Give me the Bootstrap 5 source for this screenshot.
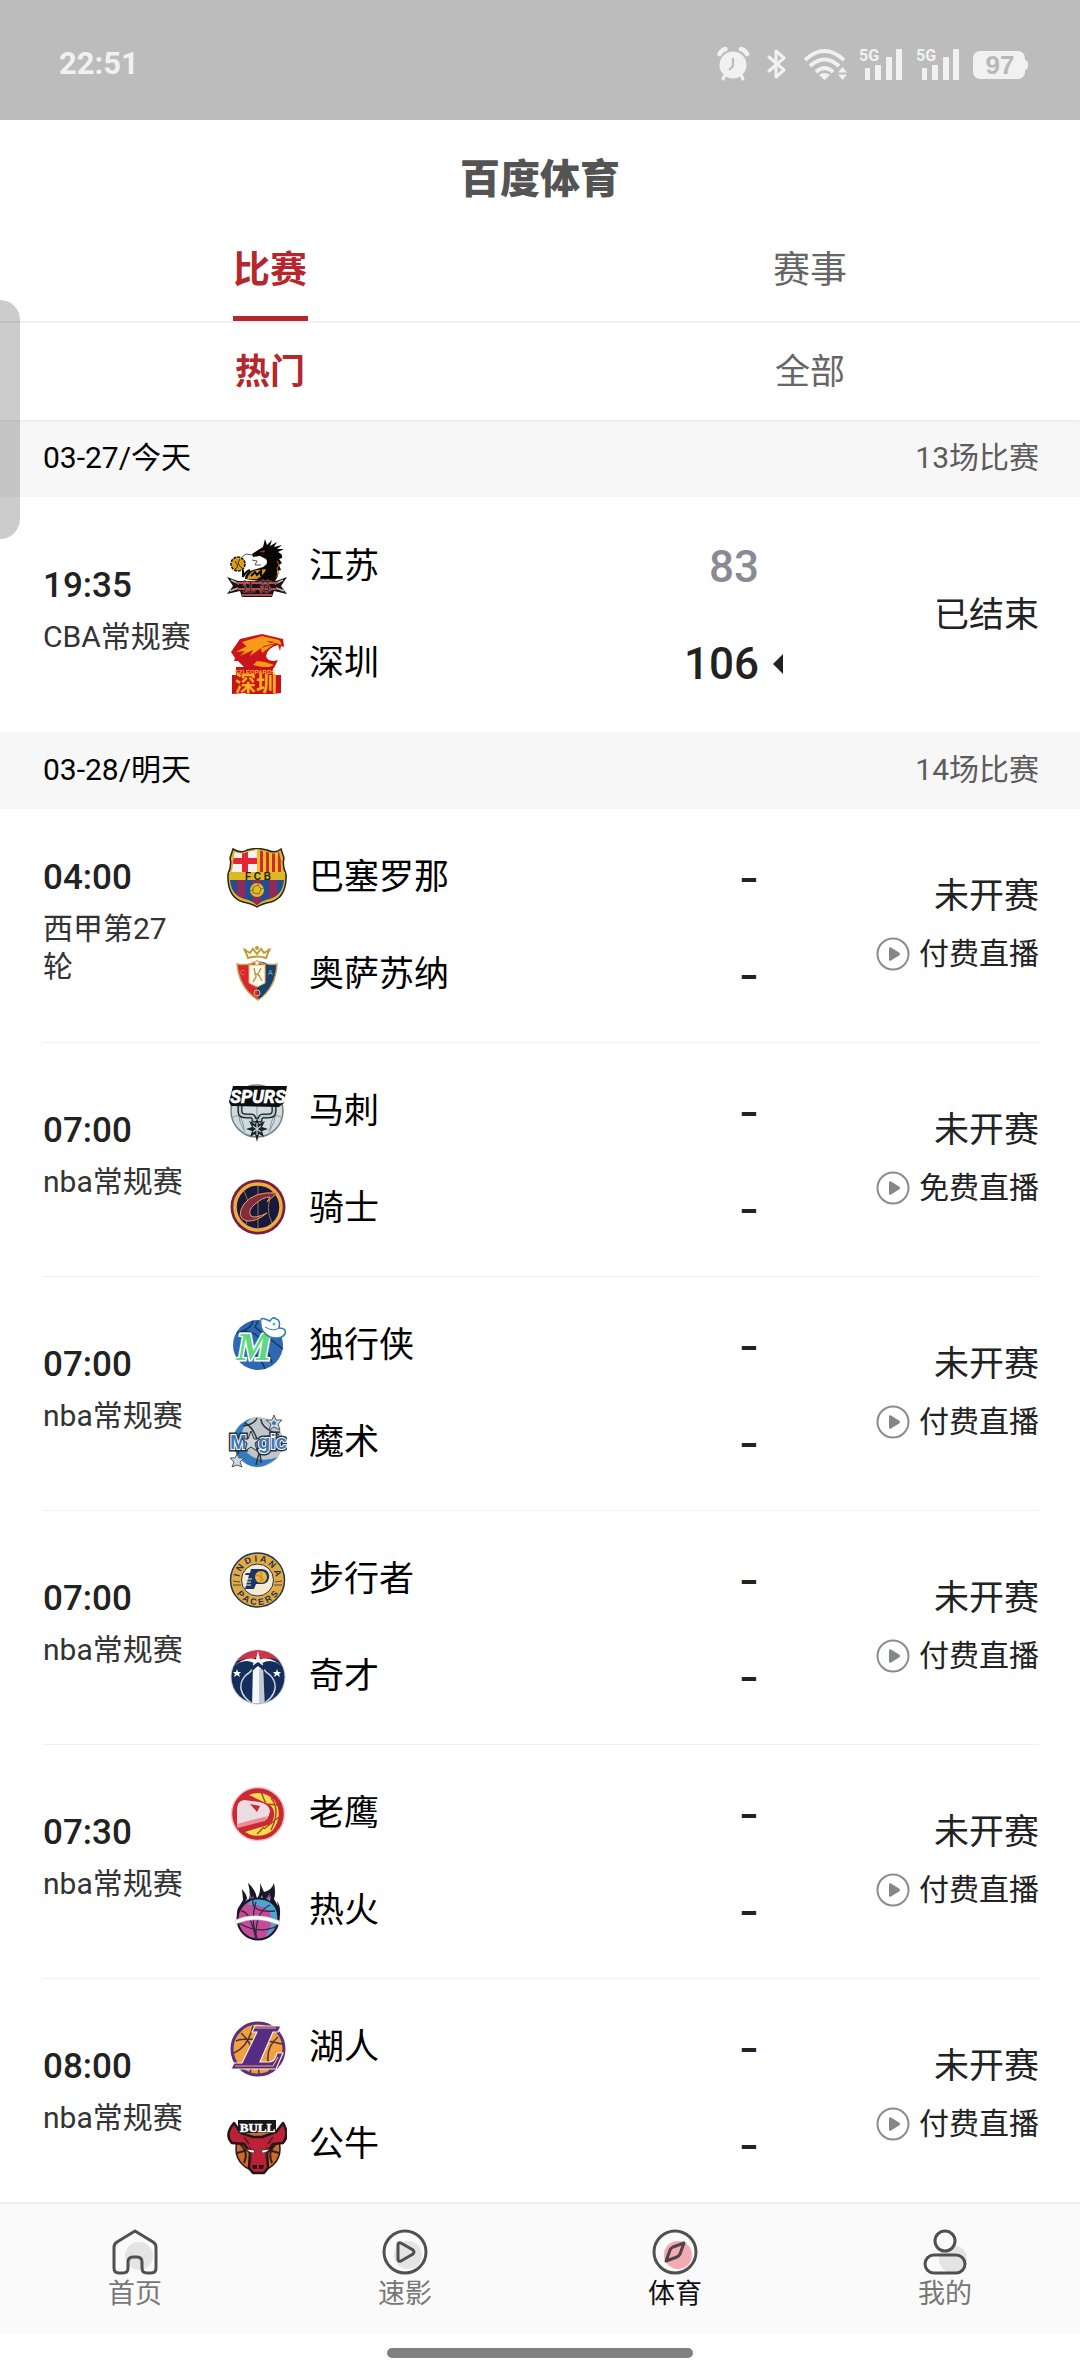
<!DOCTYPE html>
<html lang="zh-CN">
<head>
<meta charset="utf-8">
<meta name="viewport" content="width=device-width, initial-scale=1">
<title>百度体育</title>
<link href="https://cdn.jsdelivr.net/npm/bootstrap@5.3.0/dist/css/bootstrap.min.css" rel="stylesheet">
<style>
body{font-family:Roboto,"Noto Sans CJK SC",sans-serif;background:#fff;color:#000}
button{background:none;border:0;padding:0}
svg{display:block;flex:none}
svg text{font-family:"Liberation Sans","Noto Sans CJK SC",sans-serif}
.statusbar{height:120px;background:#bcbcbc;color:#f1f1f1;padding:8px 52px 0 59px}
.clock{font-size:31px;font-weight:700;line-height:40px}
.status-icons{gap:12px}
.status-icons .net-label{font-family:Roboto,sans-serif;font-size:16px;font-weight:700}
.page-title{font-size:40px;line-height:60px;font-weight:900;color:#545454;padding:30px 0 7px;margin:0;text-align:center}
.main-tabs{border-bottom:2px solid #f0f0f0}
.main-tab{font-size:37px;line-height:100px;padding-top:4px;color:#666;position:relative}
.sub-tab{font-size:35px;line-height:95px;padding-top:2px;color:#666}
.main-tab.active,.sub-tab.active{color:#b4282d;font-weight:700}
.main-tab.active::after{content:"";position:absolute;left:50%;bottom:0;width:75px;height:5px;margin-left:-37px;background:#b4282d}
.match-list{min-height:0;overflow-y:auto;scrollbar-width:none}
.match-list::-webkit-scrollbar{display:none}
.day-head{background:#f7f7f7;font-size:30px;line-height:75px;padding:0 41px 2px 43px;margin:0;font-weight:400}
.day-count{color:#5c5c5c}
.first-day{box-shadow:inset 0 2px 2px #eee}
.fixture{margin:0 41px 0 43px;padding:39px 0 37px;border-bottom:1px solid #f0f0f0}
.fixture.ended{padding:40px 0 38px;border-bottom:0}
.when{width:152px;margin-right:32px;flex:none}
.kickoff{font-size:35px;line-height:20px;font-weight:500;color:#222;margin-bottom:22px}
.league{font-size:30px;line-height:38px;color:#333}
.sides{gap:37px}
.side{height:60px;font-size:35px;line-height:60px}
.side svg{margin-right:22px}
.points{font-size:44px;font-weight:500;color:#222;margin-left:auto}
.points.lost{color:#8a8a94}
.points.unset{font-family:Inter,sans-serif}
.mark-slot{width:24px;padding-left:14px}
.state{width:256px;flex:none;font-size:35px;line-height:44px;color:#222;gap:13px}
.watch{font-size:30px;line-height:44px;color:#222;text-decoration:none;gap:9px;padding-bottom:3px}
.edge-handle{position:absolute;left:0;top:300px;width:20px;height:239px;border-radius:0 20px 20px 0;background:rgba(0,0,0,.2);z-index:5}
.bottom-bar{background:#fafafa;border-top:2px solid #f0f0f0;height:132px}
.bottom-item{font-size:27px;line-height:36px;color:#777;text-decoration:none;padding-top:24px}
.bottom-item.active{color:#111}
.home-strip{height:42px;padding-top:14px}
.home-pill{width:306px;height:10px;border-radius:5px;background:#808080}
</style>
<script src="https://cdn.jsdelivr.net/npm/bootstrap@5.3.0/dist/js/bootstrap.bundle.min.js"></script>
</head>
<body>
<svg width="0" height="0" class="position-absolute" aria-hidden="true">
  <symbol id="play" viewBox="0 0 34 34"><circle cx="17" cy="17" r="15.500" fill="#fff" stroke="#8b8b90" stroke-width="2"/><path d="M13 11.500q0-2 2-1l8 5q2 1.500 0 3l-8 5q-2 1-2-1z" fill="#85858c"/></symbol>
</svg>
<div class="vh-100 d-flex flex-column position-relative overflow-hidden">
  <div class="statusbar d-flex align-items-center justify-content-between flex-shrink-0">
    <div class="clock">22:51</div>
    <div class="status-icons d-flex align-items-center">
      <svg width="38" height="36" viewBox="0 0 38 36"><g fill="none" stroke="#f1f1f1" stroke-linecap="round"><path d="M2.500 8q2-4 6-5M30 8q-2-4-6-5" stroke-width="4.500"/><path d="M8 29l-2 4M24 29l2 4" stroke-width="3"/></g><circle cx="16" cy="19" r="13.500" fill="#f1f1f1"/><path d="M16 12v8l-4 4" fill="none" stroke="#bcbcbc" stroke-width="2.200"/></svg>
      <svg width="24" height="36" viewBox="0 0 24 36"><path d="M2 11l15 13-8 7V5l8 7L2 25" fill="none" stroke="#f1f1f1" stroke-width="3" stroke-linejoin="round" stroke-linecap="round"/></svg>
      <svg width="44" height="36" viewBox="0 0 44 36"><g fill="none" stroke="#f1f1f1" stroke-width="4"><path d="M2 14q19.500-18 39 0M7 20q14.500-13 29 0M13 26q8.500-8 17 0"/></g><path d="M16 29q5.500-4 11 0l-5.500 5zM35 26.500h9L39.500 21zM35 28.500h9L39.500 34z" fill="#f1f1f1"/></svg>
      <svg width="45" height="36" viewBox="0 0 45 36"><text class="net-label" x="0" y="15" fill="#f1f1f1">5G</text><path fill="#f1f1f1" d="M6 22h5v12H6zM16 19h6v15h-6zM27 11h6v23h-6zM37 3h6v31h-6z"/></svg>
      <svg width="45" height="36" viewBox="0 0 45 36"><text class="net-label" x="0" y="15" fill="#f1f1f1">5G</text><path fill="#f1f1f1" d="M6 22h5v12H6zM16 19h6v15h-6zM27 11h6v23h-6zM37 3h6v31h-6z"/></svg>
      <svg width="55" height="36" viewBox="0 0 55 36"><rect x="0" y="5" width="52" height="28" rx="7" fill="#f1f1f1"/><path d="M52 14q3 0 3 5t-3 5z" fill="#f1f1f1"/><text x="27" y="28" font-size="26" font-weight="700" text-anchor="middle" fill="#b8b8b8">97</text></svg>
    </div>
  </div>
  <h1 class="page-title flex-shrink-0">百度体育</h1>
  <nav class="main-tabs d-flex flex-shrink-0">
    <button type="button" class="main-tab active w-50">比赛</button>
    <button type="button" class="main-tab w-50">赛事</button>
  </nav>
  <nav class="d-flex flex-shrink-0">
    <button type="button" class="sub-tab active w-50">热门</button>
    <button type="button" class="sub-tab w-50">全部</button>
  </nav>

  <main class="match-list flex-grow-1">
    <h2 class="day-head first-day d-flex justify-content-between"><span>03-27/今天</span><span class="day-count">13场比赛</span></h2>
    <article class="fixture ended d-flex align-items-center">
      <div class="when"><div class="kickoff">19:35</div><div class="league">CBA常规赛</div></div>
      <div class="sides d-flex flex-column flex-grow-1">
        <div class="side d-flex align-items-center">
          <svg width="60" height="60" viewBox="0 0 60 60"><path d="M18 42q0-7 8-9l10-3q6-3 3-8l-6-3-7 1-1-3 6-4 5-3 2-8 2 6 5-5-2 6 7-4-3 5 8-2-5 4 7 0-6 3q5 2 4 6l-3 1 3 4-3 2 2 5-4 1 1 5-4 7z" fill="#080706"/><path d="M20 42q2-8 10-9l9-1q-2 6-9 10z" fill="#d99518"/><path d="M24 39l4-4 2 3 4-4v5M16 33v7q2-5 7-7" fill="none" stroke="#090807" stroke-width="2"/><circle cx="11" cy="27" r="7" fill="#dd9b1c" stroke="#100c06" stroke-width="1.500" stroke-dasharray="3 1"/><path d="M8 24q5 6 0 8M13 22q-4 5 2 9" fill="none" stroke="#3b2506"/><path d="M25 23l5 1-2 4 6 0M25 18l-6-1-4 3M33 15l4-1" fill="none" stroke="#555"/><path d="M35 15l3-1" stroke="#e02420"/><path d="M50 24l2 4-2 4 2 4-3 4" fill="none" stroke="#cf641d"/><path d="M0 40l11 4h38l11-4-6 9 6 8-13-3-2 6H15l-2-6-13 3 6-8z" fill="#191314"/><path d="M4 43l8 4M3 54l8-3M56 43l-8 4M57 54l-8-3" stroke="#c5bbbb" stroke-width="1.500"/><path d="M9 46h42M10 52h40M15 58h30" stroke="#b34b50" stroke-width="2"/><text x="30" y="54" font-size="13" font-weight="700" text-anchor="middle" fill="#1a1115" stroke="#d77376" stroke-width=".5">江 苏</text></svg>
          <span>江苏</span><span class="points lost">83</span><span class="mark-slot"></span>
        </div>
        <div class="side d-flex align-items-center">
          <svg width="60" height="60" viewBox="0 0 60 60"><path d="M4 18L13 5l22-5 21 5 1 8-3-1-1 5-2-6q-11 3-12 11 2 7 12 4l-4 8H18l-7-7-4 0 1-3z" fill="#c9141b"/><path d="M15 8l20-6 17 4q3 3 2 5l-5-2-12 3-14 10 3-6-13 6 8-8zM9 18l9-5 13-3-12 7zM26 31l4-4 8 1 9 3-7 3M34 14l13-4-12 9z" fill="#f69a18"/><path d="M39 7l9 1-4 1z" fill="#ac1518"/><path d="M9 33h37v8h8v18l-8 1H20l-2-1-13 1V41h4z" fill="#c51318"/><text x="28" y="39.500" text-anchor="middle" font-size="6" font-weight="700" fill="#f6b534">SZLEOPARDS</text><text x="29" y="57" text-anchor="middle" font-size="21" font-weight="700" fill="#ffb21e">深圳</text></svg>
          <span>深圳</span><span class="points">106</span><span class="mark-slot"><svg width="10" height="20" viewBox="0 0 10 20"><path d="M10 0v20L0 10z" fill="#222"/></svg></span>
        </div>
      </div>
      <div class="state d-flex flex-column align-items-end"><span>已结束</span></div>
    </article>

    <h2 class="day-head d-flex justify-content-between"><span>03-28/明天</span><span class="day-count">14场比赛</span></h2>

    <article class="fixture d-flex align-items-center">
      <div class="when"><div class="kickoff">04:00</div><div class="league">西甲第27轮</div></div>
      <div class="sides d-flex flex-column flex-grow-1">
        <div class="side d-flex align-items-center">
          <svg width="60" height="60" viewBox="0 0 60 60"><defs><clipPath id="fcb"><path d="M8 4q6 3 12 0l10-2 10 2q6 3 12 0l2 9q-1 7 3 14 1 20-15 24-8 2-12 6-4-4-12-6Q2 47 3 27q4-7 3-14z"/></clipPath></defs><path d="M6 1q8 5 14 1l10-2 10 2q8 4 14-1l3 9q-2 8 2 16 1 23-15 28-10 2-14 5-4-3-14-5Q0 49 1 26q4-8 2-16z" fill="#d9b52f" stroke="#262419" stroke-width="1.500"/><g clip-path="url(#fcb)"><path d="M0 0h30v24H0z" fill="#f6f0ee"/><path d="M15 0h6v24h-6zM0 10h30v6H0z" fill="#e22739"/><path d="M30 0h30v24H30z" fill="#edbd2b"/><path d="M33 0h3v24h-3zM39 0h3v24h-3zM45 0h3v24h-3zM51 0h3v24h-3z" fill="#cd2b32"/><path d="M0 32h60v30H0z" fill="#214d96"/><path d="M10 32h8v28h-8zM26 32h8v28h-8zM42 32h8v28h-8z" fill="#92295a"/></g><path d="M2 24h56v8H2z" fill="#ddb928"/><text x="31" y="32" font-size="10" font-weight="700" text-anchor="middle" fill="#272315">F C B</text><circle cx="30" cy="42" r="7" fill="#e2b92c"/><path d="M26 39l5-2 3 4-2 5-6-1zM23 43l4-2M34 41l3-1M31 37v-2" fill="none" stroke="#8e6d22"/></svg>
          <span>巴塞罗那</span><span class="points unset">-</span><span class="mark-slot"></span>
        </div>
        <div class="side d-flex align-items-center">
          <svg width="60" height="60" viewBox="0 0 60 60"><path d="M10 19q12 2 20-3 8 5 20 3-1 24-19 36Q12 43 10 19z" fill="#d9252e" stroke="#c6a65b" stroke-width="1.500"/><path d="M32 16q8 5 17 4-1 21-17 34l-2-11 9-6V18z" fill="#15436f"/><path d="M22 20h16v18l-8 4-8-4z" fill="#fffdf2" stroke="#d8b75b"/><path d="M27 23l2 9-3 5M34 23l-3 6 4 7M27 28l6 3" fill="none" stroke="#bd9e48" stroke-width="1.500"/><path d="M21 13l-3-8 5 3 3-4 4 5 4-5 3 4 5-3-3 8q-9-3-18 0z" fill="none" stroke="#c49b32" stroke-width="2"/><g fill="#c49b32"><circle cx="30" cy="3" r="2"/><circle cx="18" cy="5" r="1.500"/><circle cx="42" cy="5" r="1.500"/></g><circle cx="30" cy="18" r="2" fill="#fff" stroke="#d8b75b"/><circle cx="30" cy="48" r="3" fill="none" stroke="#e4cb82"/><text x="13" y="30" font-size="7" fill="#e98a5b">C</text><text x="41" y="30" font-size="7" fill="#9fb0b8">A</text></svg>
          <span>奥萨苏纳</span><span class="points unset">-</span><span class="mark-slot"></span>
        </div>
      </div>
      <div class="state d-flex flex-column align-items-end"><span>未开赛</span><a href="#" class="watch d-flex align-items-center"><svg width="34" height="34"><use href="#play"/></svg>付费直播</a></div>
    </article>

    <article class="fixture d-flex align-items-center">
      <div class="when"><div class="kickoff">07:00</div><div class="league">nba常规赛</div></div>
      <div class="sides d-flex flex-column flex-grow-1">
        <div class="side d-flex align-items-center">
          <svg width="60" height="60" viewBox="0 0 60 60"><circle cx="30" cy="29" r="26" fill="#cfdbdf" stroke="#748087" stroke-width="1.500"/><path d="M14 10q-8 21 4 40M46 10q8 21-4 40M30 4v50M5 36q10-8 12 12M55 36q-10-8-12 12" fill="none" stroke="#88959b"/><path d="M13 23v6q0 5 6 5h5q3 0 3 4h6q0-4 3-4h5q6 0 6-5v-6" fill="none" stroke="#11191d" stroke-width="5"/><path d="M13 24v5q0 5 6 5h5q3 0 3 4h6q0-4 3-4h5q6 0 6-5v-5" fill="none" stroke="#b9c6ca" stroke-width="2.500"/><path d="M30 36l2 6 6-3-3 6 6 2-6 2 2 6-5-3-2 8-2-8-5 3 2-6-6-2 6-2-3-6 6 3z" fill="#17242a"/><path d="M30 41v12M26 44l8 6M34 44l-8 6" stroke="#cbd6da" stroke-width="1.200"/><path d="M6 4h54l-3 17-5 4-48-1-2-4z" fill="#0b0d0e"/><text x="31" y="21" font-size="18" font-weight="700" font-style="italic" text-anchor="middle" fill="#fff" stroke="#fff" stroke-width=".6" style="font-family:Roboto,sans-serif">SPURS</text></svg>
          <span>马刺</span><span class="points unset">-</span><span class="mark-slot"></span>
        </div>
        <div class="side d-flex align-items-center">
          <svg width="60" height="60" viewBox="0 0 60 60"><circle cx="31" cy="28" r="27.500" fill="#72223a"/><circle cx="31" cy="28" r="23" fill="#171a3d" stroke="#efaa43" stroke-width="3.500"/><path d="M31 6v45M17 12q8 15 2 33M46 12q-9 17-1 32" fill="none" stroke="#bd8b43" stroke-width=".8"/><path d="M50 14q-23-2-33 11-9 14 3 17 9 1 20-8-12 6-16 3-4-5 4-12 8-7 15-7l-3 5z" fill="#862a40" stroke="#dfa553" stroke-width="1"/></svg>
          <span>骑士</span><span class="points unset">-</span><span class="mark-slot"></span>
        </div>
      </div>
      <div class="state d-flex flex-column align-items-end"><span>未开赛</span><a href="#" class="watch d-flex align-items-center"><svg width="34" height="34"><use href="#play"/></svg>免费直播</a></div>
    </article>

    <article class="fixture d-flex align-items-center">
      <div class="when"><div class="kickoff">07:00</div><div class="league">nba常规赛</div></div>
      <div class="sides d-flex flex-column flex-grow-1">
        <div class="side d-flex align-items-center">
          <svg width="60" height="60" viewBox="0 0 60 60"><circle cx="31" cy="29" r="25" fill="#2e68b0"/><path d="M10 17q23-9 35 30M26 5q-2 8-13 11M31 5l-3 6 28 22M20 34q14 6 18 19" fill="none" stroke="#123963" stroke-width="1.500"/><text x="27" y="44" font-size="40" font-weight="700" font-style="italic" text-anchor="middle" fill="#5fd87f" stroke="#fff" stroke-width="3" paint-order="stroke" style="font-family:'Liberation Serif',serif">M</text><path d="M34 9q-2-8 4-6l5 2q3-5 6-2 5 1 3 9 8 0 6 6-4 6-15 3-9-5-9-12z" fill="#fff" stroke="#3478b4" stroke-width="1.500"/><path d="M38 11q8 5 14 1" fill="none" stroke="#3478b4"/><circle cx="47" cy="8" r="1.500" fill="#48c39f"/></svg>
          <span>独行侠</span><span class="points unset">-</span><span class="mark-slot"></span>
        </div>
        <div class="side d-flex align-items-center">
          <svg width="60" height="60" viewBox="0 0 60 60"><circle cx="31" cy="29" r="25" fill="#bfc5ca"/><path d="M24 5Q-2 17 10 42q17 23 41 2-26 10-38-15Q15 12 24 5z" fill="#337cc0"/><path d="M18 10q14 7 16 40M30 5q-3 7-14 8M53 19q-17 0-24 33M34 6q0 9 18 16" fill="none" stroke="#29333b" stroke-width="1.500"/><path d="M47 2l2 5 6 0-4 4 2 6-6-3-5 3 2-6-5-4h6zM10 41l2 4 5 0-4 4 2 5-5-2-5 2 2-5-4-4h5z" fill="#d3d7da" stroke="#4b5a66"/><circle cx="47" cy="10" r="2" fill="#3178b8"/><g font-size="20" font-weight="700" paint-order="stroke"><g fill="#25313b" stroke="#25313b" stroke-width="5"><text x="3" y="36">M</text><text x="31" y="36">gic</text></g><g fill="#3f79b8" stroke="#fff" stroke-width="2"><text x="3" y="36">M</text><text x="31" y="36">gic</text></g></g><path d="M24 18l3 8h6l-5 4 2 8-6-4-6 4 2-8-5-4h6z" fill="#cdd2d7" stroke="#27323c"/></svg>
          <span>魔术</span><span class="points unset">-</span><span class="mark-slot"></span>
        </div>
      </div>
      <div class="state d-flex flex-column align-items-end"><span>未开赛</span><a href="#" class="watch d-flex align-items-center"><svg width="34" height="34"><use href="#play"/></svg>付费直播</a></div>
    </article>

    <article class="fixture d-flex align-items-center">
      <div class="when"><div class="kickoff">07:00</div><div class="league">nba常规赛</div></div>
      <div class="sides d-flex flex-column flex-grow-1">
        <div class="side d-flex align-items-center">
          <svg width="60" height="60" viewBox="0 0 60 60"><defs><path id="pt" d="M12 30a18.500 18.500 0 0 1 37 0"/><path id="pb" d="M5.500 30a25 25 0 0 0 50 0"/></defs><circle cx="30.500" cy="30" r="27" fill="#e2aa45" stroke="#263449" stroke-width="1.500"/><circle cx="30.500" cy="30" r="16" fill="#f7ead3" stroke="#263449"/><g font-size="9" font-weight="700" fill="#26324a" text-anchor="middle"><text><textPath href="#pt" startOffset="50%">I N D I A N A</textPath></text><text><textPath href="#pb" startOffset="50%">P A C E R S</textPath></text></g><path d="M6 31l7 1M6 35l8 0M55 31l-7 1M55 35l-8 0" stroke="#4d4938"/><path d="M24 19h11q8 1 7 9-1 6-8 6h-5l-2 5h-9l4-14h-4l1-2h4z" fill="#183568"/><path d="M18 29h7M17 32h7M16 35h8" stroke="#f7ead3"/><circle cx="34" cy="27" r="6" fill="#edb33c"/><path d="M29 25q5 0 8 6M34 21v12" fill="none" stroke="#a87822" stroke-width=".8"/></svg>
          <span>步行者</span><span class="points unset">-</span><span class="mark-slot"></span>
        </div>
        <div class="side d-flex align-items-center">
          <svg width="60" height="60" viewBox="0 0 60 60"><defs><clipPath id="wz"><circle cx="31" cy="30" r="26.500"/></clipPath></defs><circle cx="31" cy="30" r="27.500" fill="#c7cfda"/><g clip-path="url(#wz)"><path d="M0 0h62v60H0z" fill="#152d5a"/><path d="M0 0h62v20q-13-11-26-8l-5-2-5 2Q13 9 0 22z" fill="#d13442"/><path d="M5 21q14-13 25-8l2 0q11-5 25 8-11-11-22-5l-4 5-4-5Q16 10 5 21z" fill="#fff"/><path d="M29 15q-3 9-10 13-6 6-5 14 2 10 14 16M33 15q3 9 10 13 6 6 5 14-2 10-14 16" fill="none" stroke="#cbd4e2" stroke-width="1.500"/><path d="M31 4l2 8 3 5 1 43H25l1-43 3-5z" fill="#f6f7f8"/><path d="M32 22h4l2 38h-6z" fill="#c4cad4"/><path d="M24 20l7-5 7 5-1 4-6-5-6 5z" fill="#152d5a"/><path d="M10 22l1 3h3l-2 2 1 3-3-2-3 2 1-3-2-2h3zM50 22l1 3h3l-2 2 1 3-3-2-3 2 1-3-2-2h3z" fill="#fff"/></g></svg>
          <span>奇才</span><span class="points unset">-</span><span class="mark-slot"></span>
        </div>
      </div>
      <div class="state d-flex flex-column align-items-end"><span>未开赛</span><a href="#" class="watch d-flex align-items-center"><svg width="34" height="34"><use href="#play"/></svg>付费直播</a></div>
    </article>

    <article class="fixture d-flex align-items-center">
      <div class="when"><div class="kickoff">07:30</div><div class="league">nba常规赛</div></div>
      <div class="sides d-flex flex-column flex-grow-1">
        <div class="side d-flex align-items-center">
          <svg width="60" height="60" viewBox="0 0 60 60"><circle cx="31" cy="30" r="26.500" fill="#c72935" stroke="#f2c4c9" stroke-width="1.500"/><path d="M22 11q14-6 25 5 10 14-1 30-9 8-22 5l-6-3 26-8q7-12-1-19z" fill="#f9dc4e"/><path d="M34 8l5 12 12 1M52 33L37 45M44 14q10 12 0 32M30 50l7-7" fill="none" stroke="#ad4a25" stroke-width="1.500"/><path d="M11 25q0-8 7-9l15 2q10 2 11 9-1 9-3 12l-4 2-26 5z" fill="#c72935"/><path d="M10 25q0-8 7-9l15 2q10 2 11 9-2 9-5 9L10 43z" fill="#ecdce1"/><path d="M10 40l31-8-3 5-27 7z" fill="#ee8b93"/><path d="M23 20l10 2-3 6z" fill="#c72935"/></svg>
          <span>老鹰</span><span class="points unset">-</span><span class="mark-slot"></span>
        </div>
        <div class="side d-flex align-items-center">
          <svg width="60" height="60" viewBox="0 0 60 60"><path d="M11 37q-3-7 2-13l3-5-1-11q6 7 5 12 5-3 1-18 8 7 9 16 4-6 3-16l4 9q8-2 10-9 2 10 0 16l4 7-1-5q5 7 2 20z" fill="#171927"/><path d="M13 30l5-9 2-4 3 6 3-8 4 8 5-9 2 6 7-5-2 10 4 11z" fill="#43a4d4"/><path d="M15 27l3-6 1 8M23 13l5 11-5-3M43 12l-2 12-4-3" fill="#c5478c"/><circle cx="31" cy="38" r="20.500" fill="#c64b95" stroke="#151827" stroke-width="2"/><path d="M25 19q26-3 25 19-3 15-12 18 9-13 5-24-6-9-23-8z" fill="#4ba5d2"/><path d="M14 30q9 0 15 28M26 19q-2 13 22 11M12 42q20 12 38 3M29 21q-6 18 1 36M43 24q-15 7-14 33" fill="none" stroke="#2f2848" stroke-width="1.300"/><path d="M8 39q21-9 45 1l-1 4q-23-10-43-1z" fill="#fff" stroke="#a8c7d8" stroke-width=".5"/></svg>
          <span>热火</span><span class="points unset">-</span><span class="mark-slot"></span>
        </div>
      </div>
      <div class="state d-flex flex-column align-items-end"><span>未开赛</span><a href="#" class="watch d-flex align-items-center"><svg width="34" height="34"><use href="#play"/></svg>付费直播</a></div>
    </article>

    <article class="fixture d-flex align-items-center">
      <div class="when"><div class="kickoff">08:00</div><div class="league">nba常规赛</div></div>
      <div class="sides d-flex flex-column flex-grow-1">
        <div class="side d-flex align-items-center">
          <svg width="60" height="60" viewBox="0 0 60 60"><circle cx="31" cy="31" r="26" fill="#f0a040" stroke="#593083" stroke-width="3"/><path d="M9 23q12-5 46 3M14 15q17 14 9 40M45 11q-17 13-13 45M7 35q14-6 19-27M51 19q-15 12-8 35" fill="none" stroke="#4d3039" stroke-width="1.500"/><path d="M28 8h26l-3 6h-5L33 44h10q5-1 7-9h6l-7 16H4l3-6h8l15-31h-5z" fill="#572c84" stroke="#fff0dd" stroke-width="1.200"/><path d="M28 10h21M8 48h38l5-9" fill="none" stroke="#f1af5b" stroke-width="1.200"/></svg>
          <span>湖人</span><span class="points unset">-</span><span class="mark-slot"></span>
        </div>
        <div class="side d-flex align-items-center">
          <svg width="60" height="60" viewBox="0 0 60 60"><circle cx="31" cy="34" r="22" fill="#cb6b2f" stroke="#2a1713" stroke-width="1.500"/><path d="M13 29q9 8 4 19M49 29q-9 8-4 19M10 38l14-4M52 38l-14-4" fill="none" stroke="#302019" stroke-width="2"/><path d="M7 8Q-3 20 5 28l12 1 6 9-1 15 4 5h11l4-5-1-15 6-9 10-1q7-8 0-20l-7 9-14 5H26l-12-4z" fill="#bb2137" stroke="#211517" stroke-width="2.500" stroke-linejoin="round"/><path d="M22 29l-5-7M41 29l5-7M24 44l-1-12M39 44l1-12" stroke="#501c25" stroke-width="1.500"/><path d="M19 34l8 1 1 3q-5 1-9-4zM43 34l-8 1-1 3q5 1 9-4z" fill="#fff" stroke="#30191a" stroke-width=".8"/><path d="M25 50l5 0v4h-4zM37 50h-5v4h4z" fill="#251316"/><path d="M11 5h38v13H11z" fill="#18191a"/><text x="30.500" y="16.500" font-size="13" font-weight="700" text-anchor="middle" fill="#fff" stroke="#fff" stroke-width=".5" style="font-family:'Liberation Serif',serif">BULL</text></svg>
          <span>公牛</span><span class="points unset">-</span><span class="mark-slot"></span>
        </div>
      </div>
      <div class="state d-flex flex-column align-items-end"><span>未开赛</span><a href="#" class="watch d-flex align-items-center"><svg width="34" height="34"><use href="#play"/></svg>付费直播</a></div>
    </article>
  </main>

  <nav class="bottom-bar d-flex flex-shrink-0">
    <a href="#" class="bottom-item w-25 d-flex flex-column align-items-center"><svg width="48" height="48" viewBox="0 0 48 48"><circle cx="28" cy="28" r="14" fill="#e4e4e4"/><path d="M24 3L6 14q-3 2-3 5v21q0 5 5 5h4q5 0 5-5V34q0-5 5-5h4q5 0 5 5v6q0 5 5 5h4q5 0 5-5V19q0-3-3-5z" fill="none" stroke="#505050" stroke-width="3" stroke-linejoin="round"/></svg>首页</a>
    <a href="#" class="bottom-item w-25 d-flex flex-column align-items-center"><svg width="48" height="48" viewBox="0 0 48 48"><circle cx="27" cy="27" r="14" fill="#e4e4e4"/><circle cx="24" cy="24" r="21" fill="none" stroke="#505050" stroke-width="3"/><path d="M17 17q0-3 3-2l12 7q2 2 0 4l-12 7q-3 1-3-2z" fill="none" stroke="#505050" stroke-width="3"/></svg>速影</a>
    <a href="#" class="bottom-item active w-25 d-flex flex-column align-items-center"><svg width="48" height="48" viewBox="0 0 48 48"><circle cx="27" cy="27" r="14" fill="#f2abb2"/><circle cx="24" cy="24" r="21" fill="none" stroke="#505050" stroke-width="3"/><path d="M33 15l-11 4q-2 1-3 3l-4 11 11-4q2-1 3-3z" fill="none" stroke="#504246" stroke-width="3" stroke-linejoin="round"/></svg>体育</a>
    <a href="#" class="bottom-item w-25 d-flex flex-column align-items-center"><svg width="48" height="48" viewBox="0 0 48 48"><circle cx="32" cy="31" r="14" fill="#e4e4e4"/><circle cx="24" cy="13" r="10" fill="#fafafa" stroke="#505050" stroke-width="3"/><rect x="4" y="27" width="40" height="18" rx="9" fill="none" stroke="#505050" stroke-width="3"/></svg>我的</a>
  </nav>
  <div class="home-strip d-flex justify-content-center flex-shrink-0"><div class="home-pill"></div></div>
  <div class="edge-handle"></div>
</div>
</body>
</html>
